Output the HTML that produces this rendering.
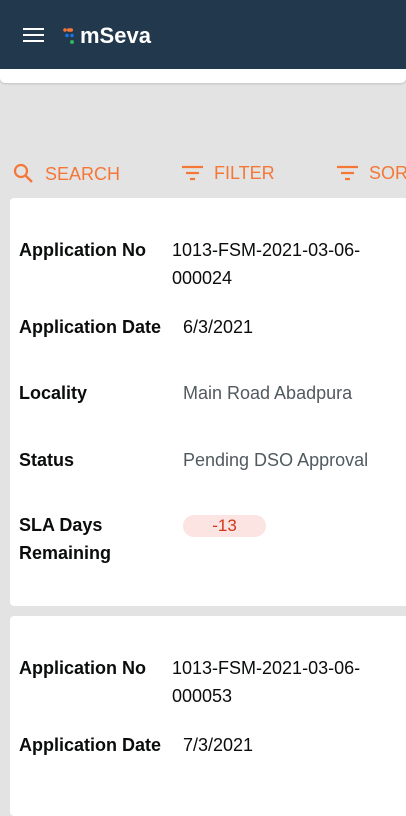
<!DOCTYPE html>
<html><head><style>
body{margin:0;width:406px;height:760px;overflow:hidden;background:#e3e3e3;font-family:"Liberation Sans",sans-serif;position:relative}
.hdr{position:absolute;left:0;top:0;width:406px;height:69px;background:#22394d}
.strip{position:absolute;left:0;top:69px;width:406px;height:14px;background:#fff;border-radius:0 0 5px 5px;box-shadow:0 1px 2px rgba(0,0,0,.15)}
.ham{position:absolute;left:23px;top:28px;width:21px}
.ham i{display:block;height:2px;background:#fff;margin-bottom:4px}
.logo{position:absolute;left:80px;top:23px;color:#fff;font-weight:bold;font-size:22px}
.bar{position:absolute;top:163px;color:#f47738;font-size:18px;white-space:nowrap}
.card{position:absolute;left:10px;width:420px;background:#fff;border-radius:4px}
.r{position:absolute;left:9px;font-size:18px;color:#0b0c0c;line-height:28px}
.r b{position:absolute;left:0;width:160px;white-space:nowrap}
.r span{position:absolute;white-space:nowrap}
.g{color:#505a5f}
.pill{position:absolute;left:173px;width:83px;height:22px;background:#fbe4e1;border-radius:11px;color:#d4351c;text-align:center;line-height:22px;font-size:17px}
</style></head><body>
<div class="hdr">
<div class="ham"><i></i><i></i><i></i></div>
<svg style="position:absolute;left:62px;top:28px" width="16" height="17"><circle cx="3" cy="2" r="1.8" fill="#f47738"/><rect x="5" y="0.3" width="6" height="3.4" rx="1.7" fill="#f47738"/><circle cx="5" cy="7.5" r="1.8" fill="#1a73e8"/><circle cx="10" cy="7.5" r="1.8" fill="#1a73e8"/><circle cx="10" cy="14" r="2" fill="#2fb35c"/></svg>
<div class="logo">mSeva</div>
</div>
<div class="strip"></div>
<div class="bar" style="left:13px"><svg width="22" height="22" style="vertical-align:-5px"><circle cx="8" cy="8" r="6" stroke="#f47738" stroke-width="2.2" fill="none"/><path d="M12.5 12.5L19 19" stroke="#f47738" stroke-width="2.4"/></svg>&nbsp; SEARCH</div>
<div class="bar" style="left:182px"><svg width="22" height="16" style="vertical-align:-2px"><path d="M0 2h21M4 8h13M8 14h5" stroke="#f47738" stroke-width="2.2"/></svg>&nbsp; FILTER</div>
<div class="bar" style="left:337px"><svg width="22" height="16" style="vertical-align:-2px"><path d="M0 2h21M4 8h13M8 14h5" stroke="#f47738" stroke-width="2.2"/></svg>&nbsp; SORT</div>

<div class="card" style="top:198px;height:408px">
<div class="r" style="top:38px"><b>Application No</b><span style="left:153px">1013-FSM-2021-03-06-<br>000024</span></div>
<div class="r" style="top:115px"><b>Application Date</b><span style="left:164px">6/3/2021</span></div>
<div class="r g" style="top:181px"><b style="color:#0b0c0c">Locality</b><span style="left:164px">Main Road Abadpura</span></div>
<div class="r g" style="top:248px"><b style="color:#0b0c0c">Status</b><span style="left:164px">Pending DSO Approval</span></div>
<div class="r" style="top:313px"><b>SLA Days<br>Remaining</b></div>
<div class="pill" style="top:317px">-13</div>
</div>
<div class="card" style="top:616px;height:200px">
<div class="r" style="top:38px"><b>Application No</b><span style="left:153px">1013-FSM-2021-03-06-<br>000053</span></div>
<div class="r" style="top:115px"><b>Application Date</b><span style="left:164px">7/3/2021</span></div>
</div>
</body></html>
